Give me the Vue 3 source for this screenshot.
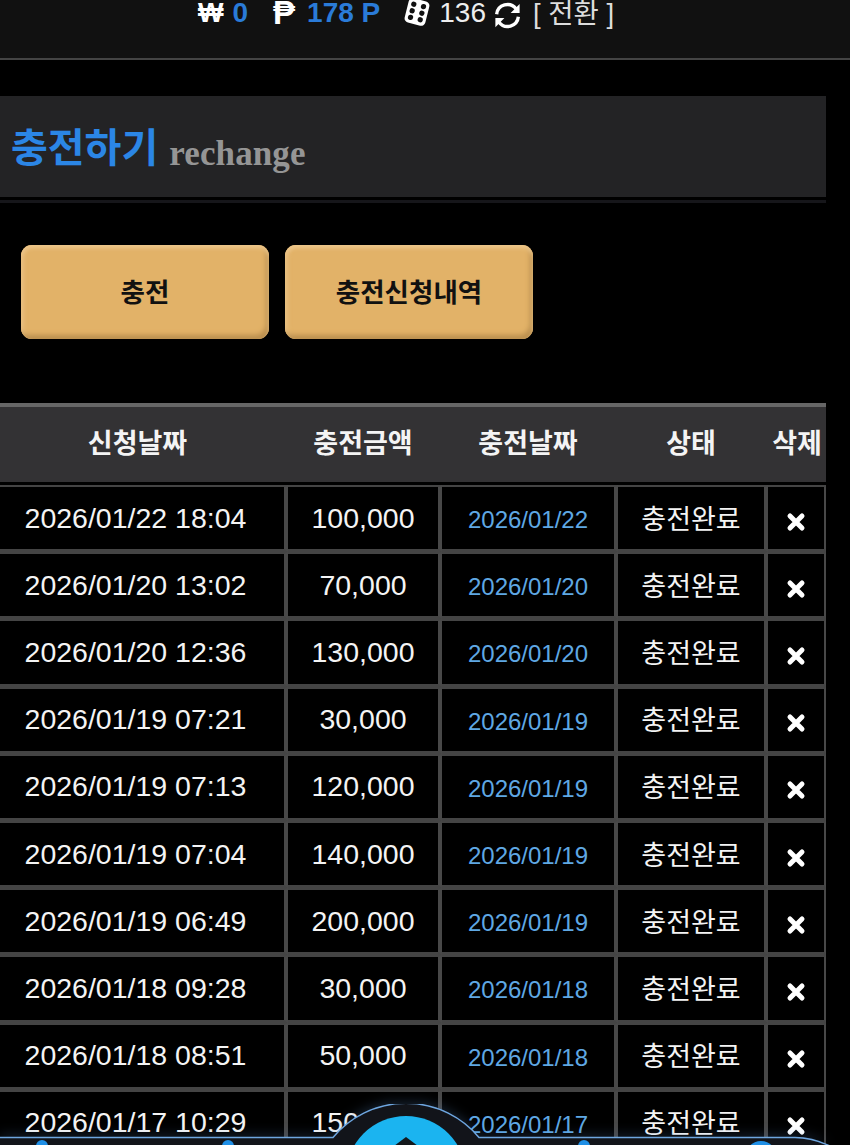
<template>
  <div class="page">
    <header class="topbar">
      <div class="wallet">
        <span class="sym">₩</span>
        <span class="amount won">0</span>
        <span class="sym peso">₱</span>
        <span class="amount">178 P</span>
        <svg class="dice" viewBox="0 0 24 24" width="30" height="30">
          <g transform="rotate(14 12 12)">
            <rect x="3.5" y="2" width="17" height="20" rx="3.5" fill="#fff" />
            <circle cx="8" cy="6.6" r="2.1" fill="#111" />
            <circle cx="16" cy="6.6" r="2.1" fill="#111" />
            <circle cx="8" cy="12" r="2.1" fill="#111" />
            <circle cx="16" cy="12" r="2.1" fill="#111" />
            <circle cx="8" cy="17.4" r="2.1" fill="#111" />
            <circle cx="16" cy="17.4" r="2.1" fill="#111" />
          </g>
        </svg>
        <span class="count">136</span>
        <svg class="refresh" viewBox="0 0 24 24" width="31" height="31" fill="none" stroke="#fff" stroke-width="2.6">
          <path d="M3.6 11a8.4 8.4 0 0 1 15-4.2" />
          <path d="M20.4 13a8.4 8.4 0 0 1-15 4.2" />
          <path d="M21.4 3v7h-7z" fill="#fff" stroke="none" />
          <path d="M2.6 21v-7h7z" fill="#fff" stroke="none" />
        </svg>
        <span class="switch">[ 전환 ]</span>
      </div>
    </header>

    <section class="title-bar">
      <h1><span class="ko">충전하기</span> <span class="en">rechange</span></h1>
    </section>
    <div class="title-line"></div>

    <div class="tabs">
      <button class="tab">충전</button>
      <button class="tab">충전신청내역</button>
    </div>

    <table class="list">
      <colgroup>
        <col class="c1" /><col class="c2" /><col class="c3" /><col class="c4" /><col class="c5" />
      </colgroup>
      <thead>
        <tr>
          <th>신청날짜</th>
          <th class="nudge">충전금액</th>
          <th class="nudge">충전날짜</th>
          <th class="nudge">상태</th>
          <th>삭제</th>
        </tr>
      </thead>
      <tbody>
        <tr v-for="row in rows" :key="row.req">
          <td>{{ row.req }}</td>
          <td>{{ row.amount }}</td>
          <td class="done-date">{{ row.done }}</td>
          <td class="state">충전완료</td>
          <td class="del">
            <svg viewBox="0 0 20 20" width="20" height="20">
              <path d="M4 4 L16 16 M16 4 L4 16" stroke="#fff" stroke-width="5" stroke-linecap="round" />
            </svg>
          </td>
        </tr>
      </tbody>
    </table>

    <nav class="dock">
      <svg class="dock-line" viewBox="0 0 850 41" width="850" height="41">
        <path
          d="M-2 33.5 H333 A95 95 0 0 1 479 33.5 H795 C808 33.5 820 37 832 43 H-2 Z"
          fill="#12141a"
          stroke="#6ea6e0"
          stroke-width="1.5"
        />
      </svg>
      <div class="home">
        <svg class="home-mark" viewBox="0 0 24 12" width="24" height="12">
          <path d="M12 0 L24 9 V12 H0 V9 Z" fill="#14181c" />
        </svg>
      </div>
      <span class="nub n1"></span>
      <span class="nub n2"></span>
      <span class="nub n3"></span>
      <span class="nub n4"></span>
    </nav>
  </div>
</template>

<script setup>
const rows = [
  { req: '2026/01/22 18:04', amount: '100,000', done: '2026/01/22' },
  { req: '2026/01/20 13:02', amount: '70,000', done: '2026/01/20' },
  { req: '2026/01/20 12:36', amount: '130,000', done: '2026/01/20' },
  { req: '2026/01/19 07:21', amount: '30,000', done: '2026/01/19' },
  { req: '2026/01/19 07:13', amount: '120,000', done: '2026/01/19' },
  { req: '2026/01/19 07:04', amount: '140,000', done: '2026/01/19' },
  { req: '2026/01/19 06:49', amount: '200,000', done: '2026/01/19' },
  { req: '2026/01/18 09:28', amount: '30,000', done: '2026/01/18' },
  { req: '2026/01/18 08:51', amount: '50,000', done: '2026/01/18' },
  { req: '2026/01/17 10:29', amount: '150,000', done: '2026/01/17' }
]
</script>

<style>
html, body { margin: 0; background: #000; overflow: hidden; }
</style>

<style scoped>
.page {
  position: relative;
  width: 850px;
  height: 1145px;
  overflow: hidden;
  background: #000;
  color: #fff;
  font-family: "Liberation Sans", "Noto Sans CJK KR", sans-serif;
}

.topbar {
  height: 58px;
  background: #111;
  border-bottom: 2px solid #444;
}
.wallet { display: flex; align-items: center; height: 26px; padding-left: 198px; font-size: 28px; line-height: 26px; }
.sym { font-weight: 700; font-size: 27px; }
.amount { color: #2a7bd8; font-weight: 700; margin-left: 9px; }
.peso { margin-left: 25px; width: 24px; font-size: 33px; }
.peso + .amount { margin-left: 10px; }
.dice { margin-left: 22px; margin-top: -2px; }
.count { margin-left: 7px; color: #eee; }
.refresh { margin-left: 6px; margin-top: 4px; }
.switch { margin-left: 10px; margin-top: 2px; color: #ddd; font-size: 27.5px; white-space: nowrap; }

.title-bar {
  margin-top: 36px;
  width: 826px;
  height: 101px;
  background: #232325;
}
h1 { margin: 0; padding: 29px 0 0 11px; font-size: 40px; line-height: 46px; font-weight: 700; white-space: nowrap; }
.ko { color: #2b86e6; }
.en { color: #959595; font-family: "Liberation Serif", serif; font-size: 35px; vertical-align: -3px; letter-spacing: 0.1px; }
.title-line { margin-top: 3px; width: 826px; height: 3px; background: #16161a; }

.tabs { display: flex; gap: 16px; padding: 42px 0 0 21px; }
.tab {
  width: 248px;
  height: 94px;
  padding: 0 0 3px;
  border: 0;
  border-radius: 11px;
  background: #e2b268;
  box-shadow: inset 0 3px 4px #edc78c, inset -3px -4px 5px #b98e4e, inset 3px 0 4px #e8bd7c;
  color: #111;
  font: 700 26.5px "Liberation Sans", "Noto Sans CJK KR", sans-serif;
}

.list {
  margin: 64px 0 0 -13px;
  width: 839px;
  table-layout: fixed;
  border-collapse: separate;
  border-spacing: 0;
}
.c1 { width: 301px; }
.c2 { width: 154px; }
.c3 { width: 176px; }
.c4 { width: 150px; }
.c5 { width: 58px; }
th {
  height: 69px;
  padding: 0 0 6px;
  background: #333234;
  background-clip: padding-box;
  border-top: 4px solid #666;
  border-bottom: 3px solid #000;
  font-size: 27px;
  font-weight: 700;
  color: #f4f4f4;
}
th.nudge { padding-right: 4px; }
td {
  height: 62.2px;
  padding: 0;
  text-align: center;
  font-size: 28.5px;
  color: #f4f4f4;
  background: #000;
  border-top: 2px solid #444;
  border-bottom: 3px solid #444;
  border-right: 4px solid #484848;
  white-space: nowrap;
}
td:last-child { border-right-width: 2px; }
.state { font-size: 27px; padding-bottom: 2px; height: 60.2px; }
.done-date { color: #5fa8e4; font-size: 24px; padding-top: 4px; height: 58.2px; }
.del { padding-top: 8px; height: 54.2px; }

.dock { position: absolute; left: 0; bottom: 0; width: 850px; height: 41px; filter: drop-shadow(0 -2px 6px rgba(90, 140, 200, 0.25)); }
.dock-line { position: absolute; left: 0; top: 0; }
.home {
  position: absolute;
  left: 346px;
  top: 12px;
  width: 120px;
  height: 120px;
  border-radius: 50%;
  background: #1bb4f0;
}
.home-mark { position: absolute; left: 48px; top: 21px; }
.nub { position: absolute; top: 36px; width: 12px; height: 12px; border-radius: 50%; background: #1f8fe6; }
.n1 { left: 36px; }
.n2 { left: 222px; }
.n3 { left: 578px; }
.n4 { left: 745px; width: 32px; height: 32px; top: 37px; }
</style>
